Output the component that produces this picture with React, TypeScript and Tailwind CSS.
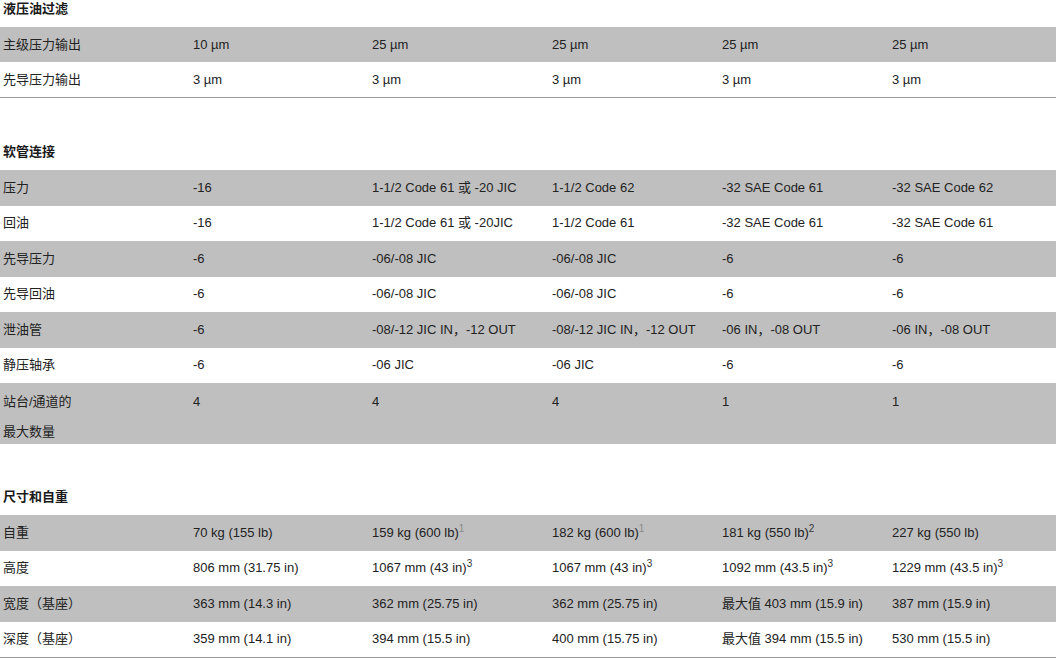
import React from "react";

type Cell = React.ReactNode;

interface Row {
  cells: Cell[];
  tall?: boolean;
}

interface Section {
  title: string;
  rows: Row[];
  bottomBorder?: boolean;
  gapTop?: string;
  rowHeight?: string;
}

const Sup: React.FC<{ n: string; light?: boolean }> = ({ n, light }) => (
  <sup className={`text-[10px] relative -top-[5px] ${light ? "text-[#8a8a8a]" : "text-[#333]"}`}>{n}</sup>
);

const sections: Section[] = [
  {
    title: "液压油过滤",
    bottomBorder: true,
    rowHeight: "h-[35px]",
    rows: [
      { cells: ["主级压力输出", "10 µm", "25 µm", "25 µm", "25 µm", "25 µm"] },
      { cells: ["先导压力输出", "3 µm", "3 µm", "3 µm", "3 µm", "3 µm"] },
    ],
  },
  {
    title: "软管连接",
    gapTop: "mt-[45px]",
    rows: [
      { cells: ["压力", "-16", "1-1/2 Code 61 或 -20 JIC", "1-1/2 Code 62", "-32 SAE Code 61", "-32 SAE Code 62"] },
      { cells: ["回油", "-16", "1-1/2 Code 61 或 -20JIC", "1-1/2 Code 61", "-32 SAE Code 61", "-32 SAE Code 61"] },
      { cells: ["先导压力", "-6", "-06/-08 JIC", "-06/-08 JIC", "-6", "-6"] },
      { cells: ["先导回油", "-6", "-06/-08 JIC", "-06/-08 JIC", "-6", "-6"] },
      { cells: ["泄油管", "-6", "-08/-12 JIC IN，-12 OUT", "-08/-12 JIC IN，-12 OUT", "-06 IN，-08 OUT", "-06 IN，-08 OUT"] },
      { cells: ["静压轴承", "-6", "-06 JIC", "-06 JIC", "-6", "-6"] },
      {
        tall: true,
        cells: [
          <div className="flex flex-col gap-[10px]">
            <span>站台/通道的</span>
            <span>最大数量</span>
          </div>,
          "4",
          "4",
          "4",
          "1",
          "1",
        ],
      },
    ],
  },
  {
    title: "尺寸和自重",
    gapTop: "mt-[44px]",
    bottomBorder: true,
    rows: [
      {
        cells: [
          "自重",
          "70 kg (155 lb)",
          <>159 kg (600 lb)<Sup n="1" light /></>,
          <>182 kg (600 lb)<Sup n="1" light /></>,
          <>181 kg (550 lb)<Sup n="2" /></>,
          "227 kg (550 lb)",
        ],
      },
      {
        cells: [
          "高度",
          "806 mm (31.75 in)",
          <>1067 mm (43 in)<Sup n="3" /></>,
          <>1067 mm (43 in)<Sup n="3" /></>,
          <>1092 mm (43.5 in)<Sup n="3" /></>,
          <>1229 mm (43.5 in)<Sup n="3" /></>,
        ],
      },
      { cells: ["宽度（基座）", "363 mm (14.3 in)", "362 mm (25.75 in)", "362 mm (25.75 in)", "最大值 403 mm (15.9 in)", "387 mm (15.9 in)"] },
      { cells: ["深度（基座）", "359 mm (14.1 in)", "394 mm (15.5 in)", "400 mm (15.75 in)", "最大值 394 mm (15.5 in)", "530 mm (15.5 in)"] },
    ],
  },
];

const SpecSection: React.FC<{ section: Section }> = ({ section }) => (
  <div className={section.gapTop}>
    <h3 className="h-[27px] pl-[3px] text-[13px] leading-[18px] font-bold text-[#1a1a1a]">{section.title}</h3>
    <div className={section.bottomBorder ? "border-b border-[#9a9a9a]" : ""}>
      {section.rows.map((row, i) => (
        <div
          key={i}
          className={`grid grid-cols-[190px_179px_180px_170px_170px_1fr] ${
            i % 2 === 0 ? "bg-[#bfbfbf]" : "bg-white"
          } ${row.tall ? "h-[61px] items-start pt-[9px]" : `${section.rowHeight ?? "h-[35.5px]"} items-center`}`}
        >
          {row.cells.map((cell, j) => (
            <div key={j} className="pl-[3px] leading-[20px] whitespace-nowrap">
              {cell}
            </div>
          ))}
        </div>
      ))}
    </div>
  </div>
);

export default function App() {
  return (
    <div
      className="w-[1056px] bg-white text-[13px] text-[#222]"
      style={{ fontFamily: '"Liberation Sans", "Noto Sans CJK SC", sans-serif' }}
    >
      {sections.map((s) => (
        <SpecSection key={s.title} section={s} />
      ))}
    </div>
  );
}
